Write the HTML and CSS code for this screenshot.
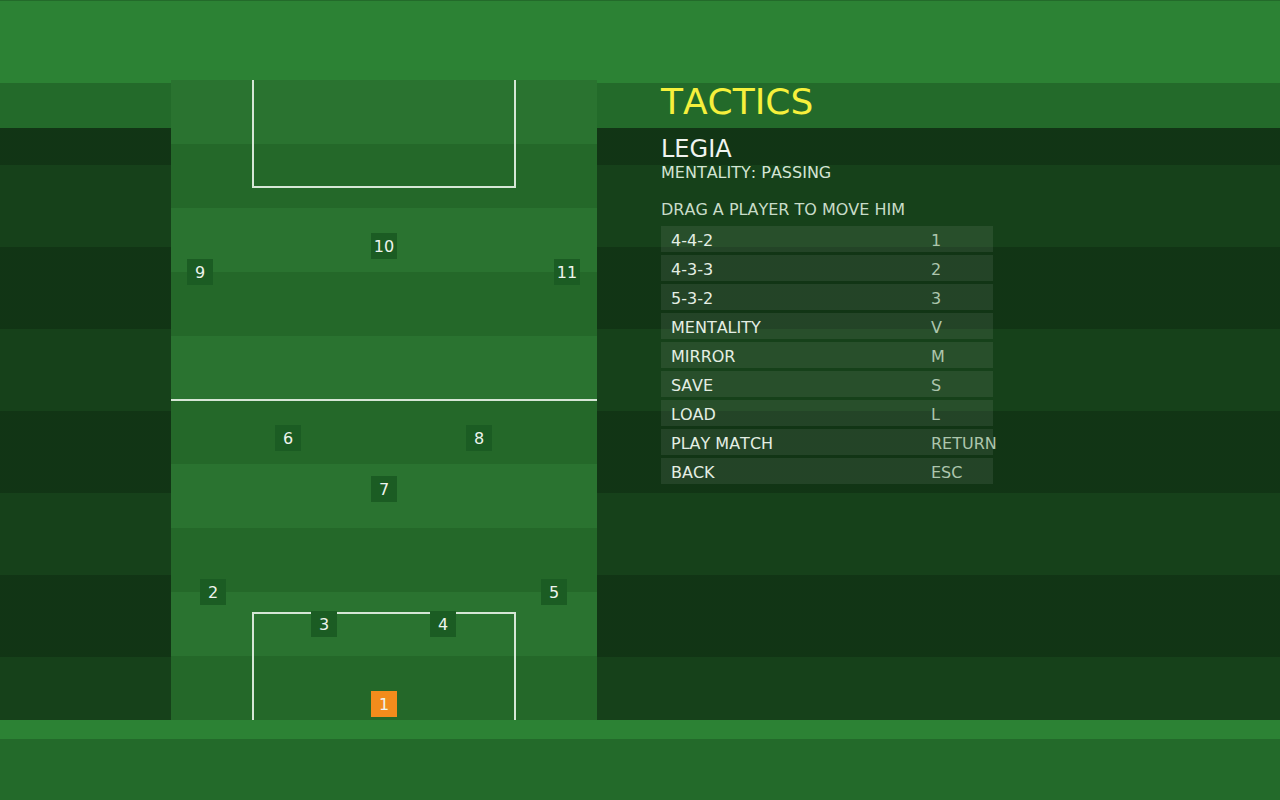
FILE: index.html
```html
<!DOCTYPE html>
<html>
<head>
<meta charset="utf-8">
<link rel="stylesheet" href="styles.css">
</head>
<body>
<div class="screen">
  <div class="pitch">
    <div class="box box-top"></div>
    <div class="halfway"></div>
    <div class="box box-bottom"></div>
    <div class="player" style="left:200px;top:153px">10</div>
    <div class="player" style="left:16px;top:179px">9</div>
    <div class="player" style="left:383px;top:179px">11</div>
    <div class="player" style="left:104px;top:345px">6</div>
    <div class="player" style="left:295px;top:345px">8</div>
    <div class="player" style="left:200px;top:396px">7</div>
    <div class="player" style="left:29px;top:499px">2</div>
    <div class="player" style="left:370px;top:499px">5</div>
    <div class="player" style="left:140px;top:531px">3</div>
    <div class="player" style="left:259px;top:531px">4</div>
    <div class="player keeper" style="left:200px;top:611px">1</div>
  </div>
  <div class="panel">
    <h1 class="title">TACTICS</h1>
    <div class="team">LEGIA</div>
    <div class="mentality">MENTALITY: PASSING</div>
    <div class="hint">DRAG A PLAYER TO MOVE HIM</div>
    <ul class="menu">
      <li class="item"><span class="label">4-4-2</span><span class="key">1</span></li>
      <li class="item"><span class="label">4-3-3</span><span class="key">2</span></li>
      <li class="item"><span class="label">5-3-2</span><span class="key">3</span></li>
      <li class="item"><span class="label">MENTALITY</span><span class="key">V</span></li>
      <li class="item"><span class="label">MIRROR</span><span class="key">M</span></li>
      <li class="item"><span class="label">SAVE</span><span class="key">S</span></li>
      <li class="item"><span class="label">LOAD</span><span class="key">L</span></li>
      <li class="item"><span class="label">PLAY MATCH</span><span class="key">RETURN</span></li>
      <li class="item"><span class="label">BACK</span><span class="key">ESC</span></li>
    </ul>
  </div>
</div>
</body>
</html>
```

FILE: styles.css
```css
html, body {
  margin: 0;
  padding: 0;
}
body {
  font-family: "DejaVu Sans", "Liberation Sans", sans-serif;
  font-kerning: none;
  overflow: hidden;
}
.screen {
  width: 1280px;
  height: 800px;
  display: flex;
  align-items: flex-start;
  background-image:
    linear-gradient(180deg, transparent 0, transparent 128px, rgba(0,0,0,0.5) 128px, rgba(0,0,0,0.5) 720px, transparent 720px),
    repeating-linear-gradient(180deg, #2c8234 0, #2c8234 82px, #236a2a 82px, #236a2a 164px);
  background-position: 0 0, 0 1px;
}
.pitch {
  position: relative;
  flex: none;
  width: 426px;
  height: 640px;
  margin-left: 171px;
  margin-top: 80px;
  background-image: repeating-linear-gradient(180deg, #2a7330 0, #2a7330 64px, #246829 64px, #246829 128px);
}
.box {
  position: absolute;
  left: 81px;
  width: 260px;
  height: 106px;
  border: 2px solid #d6e6d6;
}
.box-top {
  top: 0;
  border-top: none;
}
.box-bottom {
  top: 532px;
  border-bottom: none;
}
.halfway {
  position: absolute;
  left: 0;
  right: 0;
  top: 319px;
  height: 2px;
  background: #d6e6d6;
}
.player {
  position: absolute;
  width: 26px;
  height: 26px;
  box-sizing: border-box;
  padding-top: 1px;
  background: #1b5c23;
  color: #eef4ee;
  font-size: 16px;
  line-height: 25px;
  text-align: center;
}
.keeper {
  background: #f28c1c;
}
.panel {
  margin-left: 64px;
  padding-top: 82px;
  display: flex;
  flex-direction: column;
}
.title {
  margin: 0;
  font-size: 36px;
  font-weight: normal;
  line-height: 40px;
  color: #f6f03c;
}
.team {
  margin-top: 13px;
  font-size: 24px;
  line-height: 28px;
  color: #f0f4f0;
}
.mentality {
  font-size: 16px;
  line-height: 20px;
  color: #d4e4d4;
}
.hint {
  margin-top: 17px;
  font-size: 16px;
  line-height: 20px;
  color: #c8dcc8;
}
.menu {
  list-style: none;
  margin: 6px 0 0 0;
  padding: 0;
  display: flex;
  flex-direction: column;
  gap: 3px;
}
.item {
  width: 332px;
  height: 26px;
  box-sizing: border-box;
  padding: 3px 0 0 10px;
  display: flex;
  background: rgba(255, 255, 255, 0.08);
  font-size: 16px;
  line-height: 23px;
  white-space: nowrap;
}
.label {
  width: 260px;
  flex: none;
  color: #e4eee4;
}
.key {
  color: #adc6ad;
}
```
